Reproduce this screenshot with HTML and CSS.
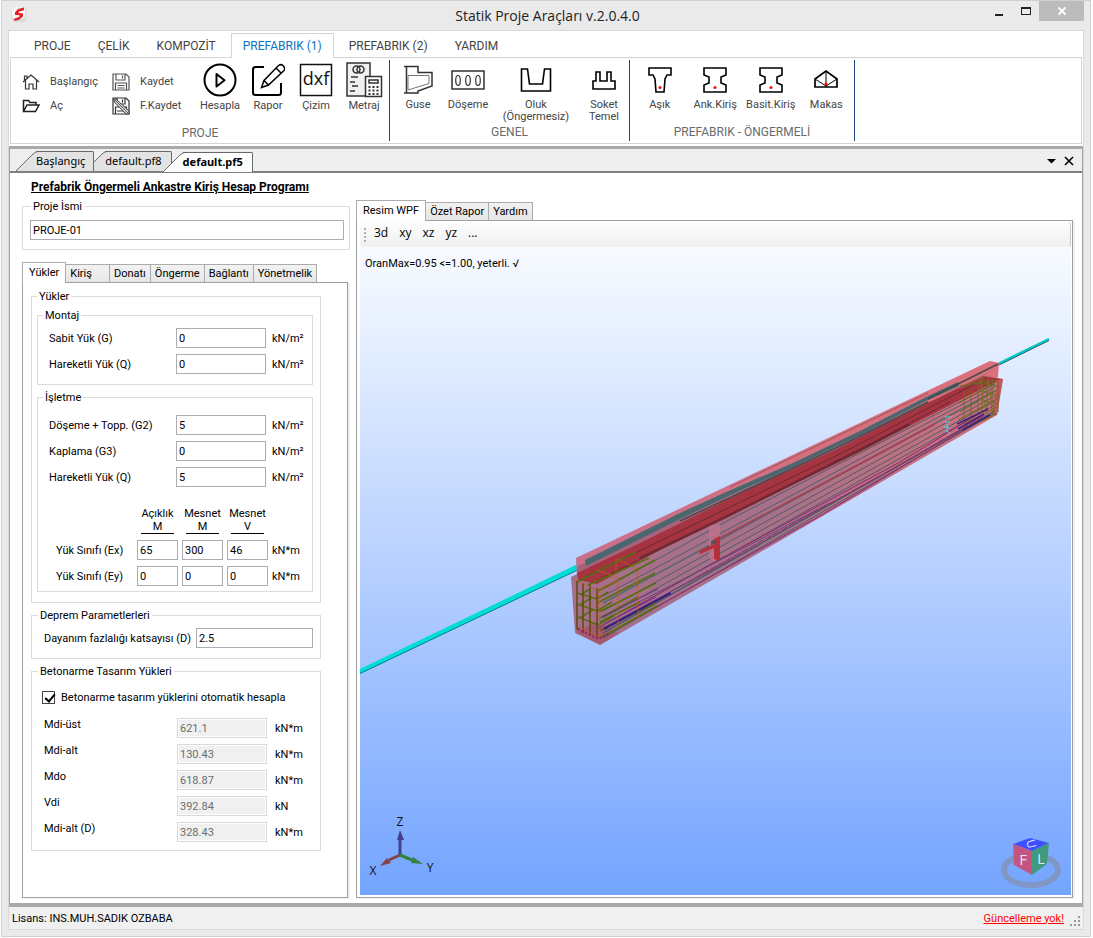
FILE: index.html
```html
<!DOCTYPE html>
<html lang="tr">
<head>
    <meta charset="UTF-8">
    <meta name="viewport" content="width=device-width, initial-scale=1.0">
    <title>Statik Proje Araçları v.2.0.4.0</title>
    <link rel="stylesheet" href="styles.css">
</head>
<body>
<div class="window">
    <header class="titlebar">
        <svg class="app-logo" width="17" height="18" viewBox="0 0 17 18">
            <rect x="0.5" y="1" width="15" height="15" rx="4" fill="#d9dadb"/>
            <rect x="1" y="1" width="13" height="12" rx="4" fill="#f6f6f6"/>
            <path d="M13 1.500 L7 3 L4 6.500 L4 9 L9 9.200 L8 11 L3 12.800 L3.500 15 L8 13.800 L12 10.500 L12 7.500 L7.500 7 L8 5.500 L13 4.200 Z" fill="#e01f26"/>
        </svg>
        <h1>Statik Proje Araçları v.2.0.4.0</h1>
        <div class="window-buttons">
            <button aria-label="Simge durumuna küçült"><svg width="12" height="12" viewBox="0 0 12 12"><path d="M2 9h8v2H2z" fill="#222"/></svg></button>
            <button aria-label="Ekranı kapla"><svg width="12" height="12" viewBox="0 0 12 12"><path d="M1 2h10v8H1zM2 4v5h8V4z" fill="#222" fill-rule="evenodd"/></svg></button>
            <button class="close" aria-label="Kapat"><svg width="10" height="10" viewBox="0 0 10 10"><path d="M1.500 1.500l7 7M8.500 1.500l-7 7" stroke="#fff" stroke-width="1.800"/></svg></button>
        </div>
    </header>

    <div class="client">
        <!-- Ribbon -->
        <nav class="ribbon-tabs">
            <button>PROJE</button>
            <button>ÇELİK</button>
            <button>KOMPOZİT</button>
            <button class="active">PREFABRIK (1)</button>
            <button>PREFABRIK (2)</button>
            <button>YARDIM</button>
        </nav>
        <div class="ribbon">
            <section class="group group-project">
                <div class="tools">
                    <div class="small-tools">
                        <button><svg width="18" height="18" viewBox="0 0 18 18" fill="none" stroke="#333" stroke-width="1.200"><path d="M1 9L9 2l8 7M3.500 7.500V16h3.500v-5h4v5h3.500V7.500M2.500 7V3h2.500v2"/></svg>Başlangıç</button>
                        <button><svg width="18" height="18" viewBox="0 0 18 18" fill="none" stroke="#222" stroke-width="1.500"><path d="M1.500 14.500V3.500h5l1.500 2h6V8M1.500 14.500L5 8h12l-3.500 6.500z"/></svg>Aç</button>
                    </div>
                    <div class="small-tools">
                        <button><svg width="18" height="18" viewBox="0 0 18 18" fill="none" stroke="#555" stroke-width="1.200"><path d="M1 1h13l3 3v13H1zM4 1v6h9V1M10.500 2.500v3M3.500 17v-7h11v7M5.500 12.500h7M5.500 15h7"/></svg>Kaydet</button>
                        <button><svg width="18" height="18" viewBox="0 0 18 18" fill="none" stroke="#333" stroke-width="1.200"><path d="M1 1h13l3 3v13H1zM5 1v6h8V1M10.500 2.500v3M3.500 17v-7h11v7M5 14h7"/><path d="M1.500 1.500l3 1L17 14v3h-3L2.500 5z" fill="#ddd" stroke-width="1"/><path d="M3 3l13 13" stroke-width="0.800"/></svg>F.Kaydet</button>
                    </div>
                    <button class="tool"><svg width="34" height="34" viewBox="0 0 34 34" fill="none" stroke="#000" stroke-width="2"><circle cx="17" cy="17" r="15.500"/><path d="M13.500 11v12.500l8-6.200z" stroke-linejoin="round"/></svg><span>Hesapla</span></button>
                    <button class="tool"><svg width="34" height="34" viewBox="0 0 34 34" fill="none" stroke="#000" stroke-width="2"><path d="M13 4H4.500Q2 4 2 6.500v23Q2 32 4.500 32h23q2.500 0 2.500-2.500V20"/><path d="M10.500 24.500l2.500-7L27.500 2.500q3-2 5 .5t.5 4.500L17.500 22zM25 5l5 5M13 17.500l4.500 4.500" stroke-width="1.500"/></svg><span>Rapor</span></button>
                    <button class="tool"><svg width="34" height="34" viewBox="0 0 34 34"><rect x="1.500" y="1.500" width="31" height="31" fill="#fff" stroke="#111" stroke-width="1.500"/><text class="dxf" x="17" y="22" text-anchor="middle">dxf</text></svg><span>Çizim</span></button>
                    <button class="tool"><svg width="37" height="36" viewBox="0 0 37 36" fill="none" stroke="#333" stroke-width="1.500"><path d="M20 34H1V1h23v13" fill="#f0f0f0"/><circle cx="10.500" cy="7.500" r="3.500"/><circle cx="14.500" cy="7.500" r="3.500"/><path d="M5 15h7M4 20h5M6 24h6M4 29h5"/><rect x="19.500" y="14.500" width="16" height="20" fill="#fff"/><rect x="23" y="18" width="9" height="3"/><path d="M22.500 25h10M22.500 28.500h10M22.500 32h10" stroke-dasharray="2 2" stroke-width="2"/></svg><span>Metraj</span></button>
                </div>
                <h2>PROJE</h2>
            </section>
            <section class="group group-general">
                <div class="tools">
                    <button class="tool"><svg width="30" height="30" viewBox="0 0 30 30" fill="none" stroke="#333"><path d="M1 1.500h14v6h14V21L15 26H15v2H1M3.500 1.500V28" stroke-width="1.500"/><path d="M5 25V10.500h21v8z" stroke="#777"/></svg><span>Guse</span></button>
                    <button class="tool"><svg width="34" height="34" viewBox="0 0 34 34" fill="none" stroke="#333" stroke-width="1.200"><rect x="1" y="8" width="32" height="18" stroke-width="1.500"/><ellipse cx="7" cy="17.500" rx="2.300" ry="5"/><ellipse cx="17" cy="17.500" rx="2.300" ry="5"/><ellipse cx="27" cy="17.500" rx="2.300" ry="5"/></svg><span>Döşeme</span></button>
                    <button class="tool wide"><svg width="32" height="32" viewBox="0 0 32 32" fill="none" stroke="#000" stroke-width="1.600"><path d="M1.500 27V5h6l2 15h13l2-15h6v22z"/></svg><span>Oluk<br>(Öngermesiz)</span></button>
                    <button class="tool"><svg width="26" height="34" viewBox="0 0 26 34" fill="none" stroke="#000" stroke-width="1.600"><path d="M2 26v-8h3V9h4v9h7V9h4v9h4v8z"/></svg><span>Soket<br>Temel</span></button>
                </div>
                <h2>GENEL</h2>
            </section>
            <section class="group group-precast">
                <div class="tools">
                    <button class="tool"><svg width="26" height="30" viewBox="0 0 26 30" fill="none" stroke="#000" stroke-width="1.600"><path d="M2 3h22v7h-4l-2 4-1 13H9L8 14l-2-4H2z"/><circle cx="13" cy="22.500" r="1.500" fill="#f00" stroke="none"/></svg><span>Aşık</span></button>
                    <button class="tool"><svg width="26" height="30" viewBox="0 0 26 30" fill="none" stroke="#000" stroke-width="1.600"><path d="M2 3h22v7l-5 2v6l5 2v7H2v-7l5-2v-6l-5-2z"/><circle cx="13" cy="22.500" r="1.500" fill="#f00" stroke="none"/></svg><span>Ank.Kiriş</span></button>
                    <button class="tool"><svg width="26" height="30" viewBox="0 0 26 30" fill="none" stroke="#000" stroke-width="1.600"><path d="M2 3h22v7l-5 2v6l5 2v7H2v-7l5-2v-6l-5-2z"/><circle cx="13" cy="22.500" r="1.500" fill="#f00" stroke="none"/></svg><span>Basit.Kiriş</span></button>
                    <button class="tool"><svg width="26" height="32" viewBox="0 0 26 32" fill="none" stroke="#000" stroke-width="1.700"><path d="M2 15L13 7l11 8v8H2z"/><path d="M13 7v16M2 15l11 7 11-7" stroke-width="1"/><circle cx="13" cy="20" r="1.500" fill="#f00" stroke="none"/></svg><span>Makas</span></button>
                </div>
                <h2>PREFABRIK - ÖNGERMELİ</h2>
            </section>
        </div>

        <!-- Document area -->
        <main class="dock">
            <div class="doc-tabs">
                <button class="doc-tab first"><svg width="22" height="20" viewBox="0 0 22 20"><path d="M0 20L17 3Q20 .5 22 .5V20z" fill="#e3e3e3"/><path d="M0 20L17 3Q20 .5 22 .5" fill="none" stroke="#696969"/></svg><span>Başlangıç</span></button>
                <button class="doc-tab"><svg width="22" height="20" viewBox="0 0 22 20"><path d="M0 20L17 3Q20 .5 22 .5V20z" fill="#e3e3e3"/><path d="M0 20L17 3Q20 .5 22 .5" fill="none" stroke="#696969"/></svg><span>default.pf8</span></button>
                <button class="doc-tab active"><svg width="22" height="20" viewBox="0 0 22 20"><path d="M0 20L17 3Q20 .5 22 .5V20z" fill="#fff"/><path d="M0 20L17 3Q20 .5 22 .5" fill="none" stroke="#696969"/></svg><span>default.pf5</span></button>
                <div class="doc-actions">
                    <button aria-label="Belgeler"><svg width="9" height="10" viewBox="0 0 9 10"><path d="M0 3h9L4.500 7.500z"/></svg></button>
                    <button aria-label="Belgeyi kapat"><svg width="10" height="10" viewBox="0 0 10 10"><path d="M1 1l8 8M9 1L1 9" stroke="#000" stroke-width="1.600"/></svg></button>
                </div>
            </div>

            <div class="document">
                <form class="side">
                    <h2 class="program-title">Prefabrik Öngermeli Ankastre Kiriş Hesap Programı</h2>
                    <fieldset class="project">
                        <legend>Proje İsmi</legend>
                        <input type="text" aria-label="Proje İsmi" value="PROJE-01">
                    </fieldset>

                    <div class="tabs">
                        <button type="button" class="active">Yükler</button>
                        <button type="button" class="roomy">Kiriş</button>
                        <button type="button">Donatı</button>
                        <button type="button">Öngerme</button>
                        <button type="button">Bağlantı</button>
                        <button type="button">Yönetmelik</button>
                    </div>
                    <div class="tab-page">
                        <fieldset class="loads">
                            <legend>Yükler</legend>
                            <fieldset class="fields">
                                <legend>Montaj</legend>
                                <div class="rows">
                                    <label for="g">Sabit Yük (G)</label><input type="text" id="g" value="0"><span>kN/m²</span>
                                    <label for="q">Hareketli Yük (Q)</label><input type="text" id="q" value="0"><span>kN/m²</span>
                                </div>
                            </fieldset>
                            <fieldset class="fields service">
                                <legend>İşletme</legend>
                                <div class="rows">
                                    <label for="g2">Döşeme + Topp. (G2)</label><input type="text" id="g2" value="5"><span>kN/m²</span>
                                    <label for="g3">Kaplama (G3)</label><input type="text" id="g3" value="0"><span>kN/m²</span>
                                    <label for="q2">Hareketli Yük (Q)</label><input type="text" id="q2" value="5"><span>kN/m²</span>
                                </div>
                                <div class="moments">
                                    <span></span>
                                    <span class="head">Açıklık<u>M</u></span><span class="head">Mesnet<u>M</u></span><span class="head">Mesnet<u>V</u></span><span></span>
                                    <label for="ex">Yük Sınıfı (Ex)</label><input type="text" id="ex" value="65"><input type="text" aria-label="Ex Mesnet M" value="300"><input type="text" aria-label="Ex Mesnet V" value="46"><span>kN*m</span>
                                    <label for="ey">Yük Sınıfı (Ey)</label><input type="text" id="ey" value="0"><input type="text" aria-label="Ey Mesnet M" value="0"><input type="text" aria-label="Ey Mesnet V" value="0"><span>kN*m</span>
                                </div>
                            </fieldset>
                        </fieldset>

                        <fieldset class="quake">
                            <legend>Deprem Parametlerleri</legend>
                            <div class="quake-row">
                                <label for="d">Dayanım fazlalığı katsayısı (D)</label><input type="text" id="d" value="2.5">
                            </div>
                        </fieldset>

                        <fieldset class="design">
                            <legend>Betonarme Tasarım Yükleri</legend>
                            <label class="check"><input type="checkbox" checked>Betonarme tasarım yüklerini otomatik hesapla</label>
                            <div class="rows">
                                <label for="mu">Mdi-üst</label><input type="text" id="mu" value="621.1" disabled><span>kN*m</span>
                                <label for="ma">Mdi-alt</label><input type="text" id="ma" value="130.43" disabled><span>kN*m</span>
                                <label for="mo">Mdo</label><input type="text" id="mo" value="618.87" disabled><span>kN*m</span>
                                <label for="vd">Vdi</label><input type="text" id="vd" value="392.84" disabled><span>kN</span>
                                <label for="md">Mdi-alt (D)</label><input type="text" id="md" value="328.43" disabled><span>kN*m</span>
                            </div>
                        </fieldset>
                    </div>
                </form>

                <section class="viewer">
                    <div class="tabs">
                        <button class="active">Resim WPF</button>
                        <button>Özet Rapor</button>
                        <button>Yardım</button>
                    </div>
                    <div class="view-page">
                        <div class="view-tools">
                            <button>3d</button>
                            <button>xy</button>
                            <button>xz</button>
                            <button>yz</button>
                            <button>...</button>
                        </div>
                        <div class="canvas">
                            <svg class="scene" viewBox="360 247 711 648">
                                <defs>
                                    <linearGradient id="side" x1="0" x2="1" y1="0" y2="0">
                                        <stop offset="0" stop-color="#a56f8a"/>
                                        <stop offset="0.500" stop-color="#a87189"/>
                                        <stop offset="1" stop-color="#d0707c"/>
                                    </linearGradient>
                                    <linearGradient id="top" x1="0" x2="1" y1="0" y2="0">
                                        <stop offset="0" stop-color="#c8708a"/>
                                        <stop offset="1" stop-color="#dc7079"/>
                                    </linearGradient>
                                </defs>
                                <!-- lifting cable outside the beam -->
                                <path d="M360 669L584 561L586 566L360 674z" fill="#00dcd8"/>
                                <path d="M360 673.500L586 566" stroke="#067f85"/>
                                <path d="M998 364L1049 339" stroke="#00c8c4" stroke-width="2.500"/>
                                <path d="M998 365.500L1049 340.500" stroke="#155f66"/>
                                <!-- concrete body -->
                                <path d="M576 558L990 361L999 363L998 377L586 583L577 577z" fill="url(#top)"/>
                                <path d="M571 577L985 375L1003 379L997 415L600 645L575 633z" fill="url(#side)"/>
                                <path d="M998 379L1003 379L997 415L992 414z" fill="#cc4a58" opacity="0.700"/>
                                <path d="M576 632L600 645L619 633L596 622z" fill="#a14b5b" opacity="0.600"/>
                                <!-- flange shading -->
                                <path d="M578 566L700 510L860 436L998 368L983 376L893 420L753 487L640 543L577 574z" fill="#a8627d"/>
                                <path d="M577 573L640 543L753 487L837 449L893 420L983 376L1001 379L927 417L860 452L793 485L727 518L660 550L597 584L578 580z" fill="#a53440"/>
                                <g stroke="#6c2a34" fill="none">
                                    <path d="M585 577L660 541L840 454L975 384M600 579L720 520L860 449L950 402"/>
                                    <path d="M640 558L727 516L860 450L910 424" stroke-width="2"/>
                                </g>
                                <!-- cable inside the beam -->
                                <path d="M585 560L680 513L733 489L793 463L860 431L928 396L958 382L959 386L928 400L860 435L793 467L733 494L682 518L586 566z" fill="#48676f"/>
                                <path d="M928 399L998 364M680 521L840 446L928 402" fill="none" stroke="#454c50" stroke-width="1.500"/>
                                <path d="M730 487L928 393" stroke="#a3505c"/>
                                <!-- longitudinal bars -->
                                <g stroke="#535b66" fill="none">
                                    <path d="M603 589L727 521L995 384"/>
                                    <path d="M603 596L995 387"/>
                                    <path d="M603 603L995 391" stroke="#58676f" stroke-width="1.500"/>
                                    <path d="M603 611L995 396"/>
                                    <path d="M603 618L995 401"/>
                                    <path d="M603 625L995 405"/>
                                    <path d="M603 633L995 411" stroke-width="1.500"/>
                                    <path d="M603 638L995 413"/>
                                </g>
                                <g stroke="#95236f" fill="none">
                                    <path d="M598 628L720 559L900 462L980 413"/>
                                    <path d="M600 631L740 553L900 465L985 415" stroke-dasharray="8 1"/>
                                    <path d="M602 637L820 516L980 420"/>
                                </g>
                                <path d="M720 538L935 424" stroke="#a5404f" stroke-width="1.500"/>
                                <path d="M602 621L730 555L830 503M603 628L760 544" fill="none" stroke="#5d4b76"/>
                                <!-- middle bracket -->
                                <path d="M709 526L720 524V558L714 562L709 558z" fill="#c0728a" opacity="0.800"/>
                                <path d="M714 539L720 536V561L714 559zM699 551L714 544V548L700 554z" fill="#b5303f"/>
                                <path d="M711 541L716 539V543L711 545z" fill="#50545f"/>
                                <!-- left cage -->
                                <g fill="none" stroke="#54700d" stroke-width="1.500">
                                    <path d="M577 582L636 552M588 585L649 558M598 591L655 560M599 602L655 573M599 612L656 583M600 622L640 602M600 630L656 603M602 637L657 606M600 618L638 597"/>
                                    <path d="M577 593L597 599L608 592M577 604L597 611L612 602M578 617L598 625L614 616M580 605L591 598M580 595L590 589M580 618L594 609"/>
                                </g>
                                <path d="M577 581V630M583 583V633M590 585V635M597 588V639" fill="none" stroke="#5c4a16" stroke-width="1.500"/>
                                <path d="M604 629L650 604L671 593" fill="none" stroke="#3d1f80" stroke-width="2"/>
                                <path d="M602 617L658 589M604 624L656 597" stroke="#762a8e"/>
                                <path d="M575 580L597 590L618 580V628M597 570L619 578M617 559L638 569V617M616 560V572M598 590L600 637L579 627" fill="none" stroke="#c05c18" stroke-dasharray="3 1"/>
                                <path d="M578 629L598 639L610 633" fill="none" stroke="#941d6d" stroke-dasharray="2 2" stroke-width="2"/>
                                <!-- right cage -->
                                <g fill="none" stroke="#6d6a22">
                                    <path d="M959 403L998 381M960 412L997 390M958 420L998 398M964 424L997 407M975 424L997 414M960 386L998 380"/>
                                    <path d="M964 391V420M971 388V419M978 381V414M982 378V413M987 379V414M992 380V415M998 382V412"/>
                                    <path d="M984 383L1000 387M983 391L999 396M983 400L998 404"/>
                                </g>
                                <path d="M980 380L986 411M988 379L993 414M961 388L985 376" stroke="#7f7220"/>
                                <path d="M957 424L988 409M958 429L984 414M963 430L990 415" stroke="#432077" stroke-width="1.500"/>
                                <path d="M945 417h7M945 422h6M944 427h6M946 431l4 2M947 424v8" fill="none" stroke="#51cbd8" stroke-width="1.500" stroke-dasharray="2 1"/>
                            </svg>
                            <p>OranMax=0.95 &lt;=1.00, yeterli. √</p>
                            <svg class="axes" width="70" height="66" viewBox="366 813 70 66">
                                <path d="M400 855V838" stroke="#41418c" stroke-width="3"/>
                                <path d="M400 830L404 840H397z" fill="#41418c"/>
                                <path d="M400 855L389 860" stroke="#844247" stroke-width="3"/>
                                <path d="M380 866L387 858L391 863z" fill="#844247"/>
                                <path d="M400 855L412 860" stroke="#348240" stroke-width="3"/>
                                <path d="M423 864L413 857L411 863z" fill="#348240"/>
                                <g text-anchor="middle"><text x="400" y="826">Z</text><text x="373" y="875">X</text><text x="430" y="872">Y</text></g>
                            </svg>
                            <svg class="cube" width="62" height="52" viewBox="0 0 62 52">
                                <ellipse cx="31" cy="33" rx="27" ry="15" fill="none" stroke="#8097c5" stroke-width="6"/>
                                <path d="M13 7L30 1L49 6L32 14z" fill="#3c50ff"/>
                                <path d="M13 7L32 14V38L14 28z" fill="#c45480"/>
                                <path d="M32 14L49 6L47 27L32 38z" fill="#409a80"/>
                                <g text-anchor="middle"><text x="23" y="28">F</text><text x="41" y="27">L</text><text class="up" x="0" y="4" transform="translate(31 7) rotate(75)">U</text></g>
                            </svg>
                        </div>
                    </div>
                </section>
            </div>
        </main>

        <footer class="status">
            <span>Lisans: INS.MUH.SADIK OZBABA</span>
            <a href="#">Güncelleme yok!</a>
            <svg width="11" height="11" viewBox="0 0 11 11" fill="#999"><path d="M8 0h2v2H8zM4 4h2v2H4zM8 4h2v2H8zM0 8h2v2H0zM4 8h2v2H4zM8 8h2v2H8z"/></svg>
        </footer>
    </div>
</div>
</body>
</html>
```
FILE: styles.css
```css
* {
    box-sizing: border-box;
}
body {
    margin: 0;
    background: #fff;
    color: #000;
    font: 11px/13px Roboto, Arial, sans-serif;
}
h1, h2, p {
    margin: 0;
}
button {
    border: 0;
    padding: 0;
    background: none;
    color: inherit;
    font: inherit;
    cursor: pointer;
}
svg {
    display: block;
    flex: none;
}

/* window frame */
.window {
    display: flex;
    flex-direction: column;
    min-height: calc(100vh - 1px);
    margin: 0 2px 1px 1px;
    border: 1px solid #d0d0d0;
    background: #eaeaea;
}
.titlebar {
    display: grid;
    grid-template-columns: 1fr auto 1fr;
    height: 29px;
    padding: 0 6px 0 9px;
}
.app-logo {
    margin-top: 5px;
}
.titlebar h1 {
    color: #222;
    font: 14px/29px "Open Sans", sans-serif;
}
.window-buttons {
    display: flex;
    justify-content: flex-end;
    height: 20px;
}
.window-buttons button {
    display: flex;
    align-items: center;
    justify-content: center;
    width: 27px;
}
.window-buttons .close {
    width: 45px;
    background: #bcbcbc;
}
.client {
    flex: 1;
    display: flex;
    flex-direction: column;
    margin: 0 6px 6px;
    border: 1px solid #d9d9d9;
    background: #fff;
}

/* ribbon */
.ribbon-tabs {
    display: flex;
    gap: 3px;
    padding: 2px 13px 0;
    color: #444;
    font: 12px/23px Roboto, sans-serif;
}
.ribbon-tabs button {
    height: 25px;
    margin-bottom: -1px;
    padding: 0 11px;
    border: 1px solid transparent;
    border-bottom: 0;
}
.ribbon-tabs .active {
    z-index: 1;
    border-color: #d4d4d4;
    background: #fff;
    color: #0b72c4;
}
.ribbon {
    display: flex;
    margin: 0 1px 2px;
    padding: 2px 0;
    border: 1px solid #d4d4d4;
}
.group {
    display: flex;
    flex-direction: column;
    height: 81px;
    border-right: 1px solid #1b4381;
    color: #444;
    font: 11px/12px Roboto, sans-serif;
}
.group h2 {
    color: #6a6a6a;
    font: 12px/18px Roboto, sans-serif;
    text-align: center;
}
.group-project {
    width: 379px;
}
.group-general {
    width: 240px;
}
.group-precast {
    width: 225px;
}
.tools {
    flex: 1;
    display: flex;
    padding-left: 11px;
}
.group-general .tools {
    padding-left: 3px;
}
.group-precast .tools {
    padding-left: 2px;
}
.small-tools {
    flex: none;
    width: 90px;
    padding-top: 10px;
}
.small-tools + .small-tools {
    width: 84px;
}
.small-tools button {
    display: flex;
    align-items: center;
    gap: 10px;
    height: 24px;
}
.tool {
    display: flex;
    flex-direction: column;
    align-items: center;
    width: 48px;
    padding-top: 2px;
}
.tool svg {
    margin: auto;
}
.tool span {
    height: 24px;
    margin-top: 2px;
}
.group-general .tool {
    width: 50px;
}
.group-general .wide {
    width: 86px;
}
.group-precast .tool {
    width: 56px;
}
.dxf {
    fill: #111;
    font: 18px "Open Sans", sans-serif;
}

/* document tabs */
.dock {
    flex: 1;
    display: flex;
    flex-direction: column;
    border: 1px solid #a0a0a0;
    border-top: 3px solid #a9a9a9;
    border-bottom: 4px solid #a9a9a9;
}
.doc-tabs {
    display: flex;
    align-items: flex-end;
    height: 24px;
    padding-left: 6px;
    border-bottom: 2px solid #808080;
    background: #efefef;
    font: 11px/17px "Noto Sans", sans-serif;
}
.doc-tab {
    display: flex;
    height: 20px;
    margin-left: -9px;
}
.doc-tab span {
    height: 20px;
    margin-left: -2px;
    padding-right: 9px;
    border: 1px solid #696969;
    border-width: 1px 1px 0 0;
    border-top-right-radius: 2px;
    background: linear-gradient(#e3e3e3, #e3e3e3) 2px 0 no-repeat;
}
.doc-tab.first {
    z-index: 1;
    margin-left: 0;
}
.doc-tab.first span {
    padding-right: 8px;
}
.doc-tab.active {
    z-index: 2;
    margin-bottom: -1px;
    font-weight: bold;
}
.doc-tab.active span {
    background-image: linear-gradient(#fff, #fff);
}
.doc-actions {
    display: flex;
    gap: 8px;
    margin: 0 8px 5px auto;
}
.document {
    flex: 1;
    display: flex;
    gap: 6px;
    padding: 7px 9px 5px 12px;
}

/* tab strips */
.tabs {
    display: flex;
    align-items: flex-end;
    line-height: 16px;
}
.tabs button {
    height: 19px;
    margin-left: -1px;
    margin-bottom: -1px;
    padding: 0 4px;
    border: 1px solid #acacac;
    background: linear-gradient(#f2f2f2, #e6e6e6);
}
.tabs .active {
    z-index: 1;
    height: 21px;
    margin-left: 0;
    padding: 0 6px;
    border-bottom: 0;
    background: #fff;
}
.tabs .roomy {
    padding-right: 17px;
}
.tab-page, .view-page {
    border: 1px solid #a0a0a0;
    box-shadow: 2px 1px #f0f0f0;
}

/* input side */
.side {
    flex: none;
    display: flex;
    flex-direction: column;
    width: 328px;
}
.program-title {
    padding-left: 9px;
    font-size: 12px;
    line-height: 14px;
    text-decoration: underline;
}
fieldset {
    min-width: 0;
    margin: 6px 0 0;
    padding: 6px 7px 10px 5px;
    border: 1px solid #dcdcdc;
}
legend {
    margin-left: 1px;
    padding: 0 2px;
}
input[type="text"] {
    min-width: 0;
    width: 100%;
    height: 20px;
    padding: 0 2px;
    border: 1px solid #abadb3;
    background: #fff;
    color: #000;
    font: inherit;
}
input[type="text"]:disabled {
    border-color: #d9d9d9;
    box-shadow: inset 0 0 0 1px #fff;
    background: #f0f0f0;
    color: #6d6d6d;
}
.project {
    padding: 7px 5px 9px 7px;
}
.side .tabs {
    margin-top: 12px;
}
.tab-page {
    flex: 1;
    width: 326px;
    padding: 1px 26px 0 8px;
}
.loads {
    padding-top: 0;
}
.loads legend {
    margin-left: 0;
}
.fields {
    padding: 6px 7px 10px 11px;
}
.fields legend {
    margin-left: -6px;
}
.service {
    padding: 11px 7px 5px 11px;
}
.rows {
    display: grid;
    grid-template-columns: 1fr 90px 33px;
    gap: 6px;
    align-items: center;
}
.moments {
    display: grid;
    grid-template-columns: 1fr 41px 41px 41px 33px;
    gap: 6px 4px;
    align-items: center;
    margin-top: 20px;
    padding-left: 7px;
}
.head {
    text-align: center;
    white-space: nowrap;
}
.head u {
    display: block;
    margin: 0 4px;
    border-bottom: 1px solid #000;
    text-decoration: none;
}
.quake-row {
    display: flex;
    align-items: center;
    justify-content: space-between;
    padding-left: 7px;
}
.quake-row input[type="text"] {
    width: 117px;
}
.design {
    padding-bottom: 8px;
}
.check {
    display: flex;
    align-items: center;
    gap: 6px;
    height: 26px;
    padding-left: 5px;
}
.check input {
    appearance: none;
    width: 13px;
    height: 13px;
    margin: 0;
    border: 1px solid #444;
    background: #fff;
}
.check input:checked::after {
    content: "";
    display: block;
    width: 4px;
    height: 8px;
    margin: 0 0 0 4px;
    border: solid #000;
    border-width: 0 2px 2px 0;
    transform: rotate(40deg);
}
.design .rows {
    margin-top: 8px;
    padding-left: 7px;
    column-gap: 8px;
    grid-template-columns: 1fr 90px 38px;
}
.design .rows label {
    align-self: start;
}

/* viewer */
.viewer {
    flex: 1;
    display: flex;
    flex-direction: column;
    min-width: 0;
    padding-top: 20px;
}
.view-page {
    flex: 1;
    display: flex;
    flex-direction: column;
    padding: 1px 1px 2px 3px;
}
.view-tools {
    display: flex;
    gap: 11px;
    height: 25px;
    padding-left: 14px;
    border-radius: 3px;
    background:
        radial-gradient(circle, #b0b0b0 1px, transparent 1px) 3px 5px / 4px 4px no-repeat,
        radial-gradient(circle, #b0b0b0 1px, transparent 1px) 3px 9px / 4px 4px no-repeat,
        radial-gradient(circle, #b0b0b0 1px, transparent 1px) 3px 13px / 4px 4px no-repeat,
        radial-gradient(circle, #b0b0b0 1px, transparent 1px) 3px 17px / 4px 4px no-repeat,
        linear-gradient(#fdfdfd, #f0f0f0);
    border-right: 1px solid #c8c8c8;
    font: 12px/22px "Open Sans", sans-serif;
}
.view-tools button {
    height: 22px;
}
.canvas {
    flex: 1;
    position: relative;
    background: linear-gradient(#f8fbff, #74a4ff);
}
.canvas p {
    position: relative;
    padding: 10px 5px;
}
.scene {
    position: absolute;
    inset: 0;
    width: 100%;
    height: 100%;
}
.axes {
    position: absolute;
    left: 6px;
    bottom: 16px;
    font: 12px "Open Sans", sans-serif;
    fill: #111;
}
.cube {
    position: absolute;
    right: 9px;
    bottom: 6px;
    font: 15px "Open Sans", sans-serif;
    fill: #dfe3ff;
}
.up {
    font-size: 12px;
}

/* status bar */
.status {
    display: flex;
    align-items: center;
    height: 22px;
    padding: 0 2px 0 3px;
    background: #f0f0f0;
}
.status a {
    margin-left: auto;
    color: #f00;
}
.status svg {
    margin: 6px 0 0 6px;
}
```
